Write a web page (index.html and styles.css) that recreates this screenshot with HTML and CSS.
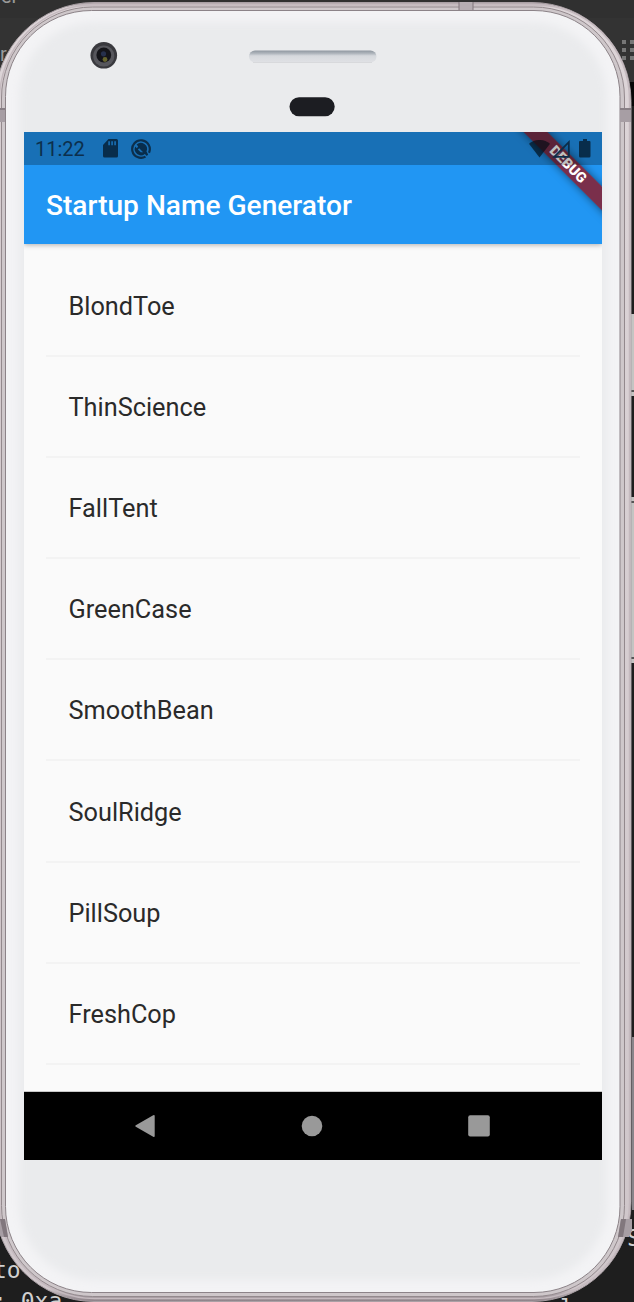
FILE: index.html
```html
<!DOCTYPE html>
<html lang="en">
<head>
<meta charset="utf-8">
<title>Startup Name Generator</title>
<link rel="stylesheet" href="styles.css">
</head>
<body>
<div class="stage">
  <svg class="backdrop" viewBox="0 0 634 1302" width="634" height="1302">
    <rect width="634" height="1302" fill="#1e1e1e"/>
    <rect width="634" height="82" fill="#333"/>
    <rect width="634" height="18" fill="#303030"/>
    <rect x="600" y="82" width="34" height="24" fill="#070707"/>
    <g fill="#777"><path d="M622 40h4v4h-4zM630 40h4v4h-4zM622 48h4v4h-4zM630 48h4v4h-4zM622 56h4v4h-4zM630 56h4v4h-4z"/></g>
    <g fill="#c4c4c2"><path d="M631 314h3v82h-3zM631 497h3v166h-3z"/><path fill="#89858a" d="M632 1037h2v173h-2z"/><path fill="#555" d="M631 390h3v2h-3zM631 501h3v2h-3zM631 657h3v2h-3z"/></g>
    <text class="ui-text" x="1" y="3">er</text>
    <text class="ui-text" x="0" y="61">r</text>
    <text class="code-text" x="-7" y="1278">to</text>
    <text class="code-text" x="-7" y="1309">: 0xa</text>
    <text class="code-text" x="627" y="1246">S</text>
    <text class="code-text" x="560" y="1316">l</text>
  </svg>
  <svg class="frame" viewBox="0 0 634 1302" width="634" height="1302">
    <defs>
      <linearGradient id="metal" x1="0" x2="0" y1="0" y2="1">
        <stop offset="0" stop-color="#a89ea3"/><stop offset=".004" stop-color="#ddd5d8"/>
        <stop offset=".99" stop-color="#cfc6ca"/><stop offset="1" stop-color="#8b8086"/>
      </linearGradient>
      <filter id="soft" x="-5%" y="-5%" width="110%" height="110%"><feGaussianBlur stdDeviation="4"/></filter>
      <clipPath id="faceClip"><rect x="6" y="10.5" width="614" height="1281.5" rx="86"/></clipPath>
      <linearGradient id="speaker" x1="0" x2="0" y1="0" y2="1">
        <stop offset="0" stop-color="#8e969f"/><stop offset=".25" stop-color="#b0b6bd"/><stop offset=".45" stop-color="#d6d9dd"/><stop offset="1" stop-color="#e0e1e5"/>
      </linearGradient>
    </defs>
    <rect x="-5" y="2.5" width="636" height="1299" rx="99" fill="url(#metal)" stroke="#aaa0a5"/>
    <rect x="-.5" y="4.5" width="630" height="1294" rx="95" fill="none" stroke="#c5babf" stroke-width="1.5"/>
    <rect x="1.5" y="7" width="623" height="1289.5" rx="91" fill="#cec7ca" stroke="#93898d"/>
    <rect x="5.5" y="10.5" width="614.5" height="1282" rx="86" fill="#f3f3f5" stroke="#8c8388"/>
    <g clip-path="url(#faceClip)"><rect x="19" y="22" width="588" height="1258" rx="76" fill="#eaebed" filter="url(#soft)"/></g>
    <path d="M0 108h5v14H0zM620 108h11v14h-11z" fill="#a79ea4"/><path d="M0 108h5v2H0zM620 108h11v2h-11z" fill="#887f85"/>
    <path d="M0 1219h5l3 18H1l-1-3zM621 1219h11v12l-3 6h-11z" fill="#a79ea4"/><path d="M0 1219h5l3 18H4zM621 1219h5l-3 18h-5z" fill="#81777d"/>
    <path d="M459 2h14v8h-14z" fill="#b6adb2"/><path d="M459 2v8M473 2v8" stroke="#81777d"/>
    <circle cx="103.800" cy="55.300" r="13.300" fill="#39393e"/>
    <circle cx="103.800" cy="56" r="10.600" fill="#57575d"/>
    <circle cx="103.800" cy="55" r="7.400" fill="#15151a"/>
    <circle cx="103.500" cy="53.800" r="2.600" fill="#26304c"/>
    <circle cx="105" cy="59.500" r="2.400" fill="#66642d"/>
    <rect x="249" y="50.500" width="127.500" height="12" rx="6" fill="url(#speaker)"/>
    <path d="M253 62.500h119" stroke="#d8d9dc"/>
    <rect x="289.500" y="97.300" width="45.200" height="19" rx="9.500" fill="#1c1d22"/>
  </svg>

  <main class="screen">
    <header class="appbar">
      <h1 class="title">Startup Name Generator</h1>
    </header>
    <div class="banner-area"><div class="banner">DEBUG</div></div>
    <div class="statusbar">
      <span class="clock">11:22</span>
      <svg class="sd" viewBox="0 0 15 19" width="15" height="19"><path fill-rule="evenodd" d="M5.500 0h8a1.500 1.500 0 0 1 1.500 1.500v15.500a1.500 1.500 0 0 1-1.500 1.500h-12A1.500 1.500 0 0 1 0 17V6zM5.300 2.200v4h1.600v-4zM8.300 2.200v4h1.600v-4zM11.300 2.200v4h1.600v-4z"/></svg>
      <svg class="agent" viewBox="0 0 20 20" width="20" height="20"><path d="M14.500 17.600A8.800 8.800 0 1 1 18 13.700" fill="none" stroke="#0c2f4c" stroke-width="2.200"/><path d="M5.600 5.600A6.200 6.200 0 0 1 15.500 12.600L17.200 15.600 15.800 17 8.200 9.200 6.800 10.500 9.700 13.200 12.200 13.300 13.800 15A6.200 6.200 0 0 1 4.300 7.600L5.800 9.200 7.200 7.600z"/></svg>
      <span class="grow"></span>
      <svg class="wifi" viewBox="0 0 21 18" width="21" height="18"><path d="M0 3.800C6-1.300 15-1.300 21 3.800L10.500 17.500z"/></svg>
      <svg class="signal" viewBox="0 0 18 18" width="18" height="18"><path d="M2.300 16.800h14.500V2.200z" fill="none" stroke="#0c2c48" stroke-width="1.800"/></svg>
      <svg class="battery" viewBox="0 0 12 19" width="12" height="19"><path d="M4 0h4v2h2.500q1 0 1 1v14q0 1.500-1.300 1.500H1.300Q0 18.500 0 17V3q0-1 1-1h3z"/></svg>
    </div>
    <ul class="list">
      <li class="item">BlondToe</li>
      <li class="item">ThinScience</li>
      <li class="item">FallTent</li>
      <li class="item">GreenCase</li>
      <li class="item">SmoothBean</li>
      <li class="item">SoulRidge</li>
      <li class="item">PillSoup</li>
      <li class="item">FreshCop</li>
    </ul>
    <nav class="navbar">
      <svg viewBox="0 0 24 24" width="24" height="24"><path d="M1.800 11.300 19.200 1.200q1.500-.7 1.500.8v20q0 1.500-1.500.8L1.800 12.700q-1.300-.7 0-1.400z"/></svg>
      <svg viewBox="0 0 24 24" width="24" height="24"><circle cx="12" cy="12" r="10.300"/></svg>
      <svg viewBox="0 0 24 24" width="24" height="24"><rect x="1.200" y="1.300" width="21.600" height="21.300" rx="2"/></svg>
    </nav>
  </main>
</div>
</body>
</html>
```
FILE: styles.css
```css
body { margin: 0; background: #1e1e1e; font-family: Roboto, sans-serif; }
.stage { position: relative; width: 634px; height: 1302px; overflow: hidden; box-sizing: border-box; padding: 132px 32px 142px 24px; }
.backdrop, .frame { position: absolute; left: 0; top: 0; }
.ui-text { font: 20px Roboto, sans-serif; fill: #999; }
.code-text { font: 23px "DejaVu Sans Mono", monospace; fill: #d0d0d0; }
.screen { position: relative; display: flex; flex-direction: column; width: 578px; height: 1028px; overflow: hidden; background: #fafafa; }
.appbar { flex: none; box-sizing: border-box; height: 111.500px; padding: 33px 22px 0; display: flex; align-items: center; background: #2196f3; box-shadow: 0 1px 5px rgba(0,0,0,.3); z-index: 1; }
.title { margin: 0; padding-top: 3px; font-size: 28.100px; font-weight: 500; color: #fff; white-space: nowrap; }
.statusbar { position: absolute; inset: 0 0 auto; z-index: 3; height: 33px; box-sizing: border-box; padding: 0 11px; display: flex; align-items: center; background: rgba(0,0,0,.25); color: #0c2f4c; fill: rgba(0,10,20,.66); }
.clock { font-size: 20px; width: 50px; margin-right: 17.500px; }
.sd { margin-right: 13.500px; }
.grow { flex: 1; }
.wifi { margin-right: 2px; }
.signal { margin-right: 9px; }
.banner-area { position: absolute; inset: 0 0 auto auto; width: 110px; height: 110px; overflow: hidden; z-index: 2; }
.banner { position: absolute; left: 1px; top: 23.500px; width: 150px; height: 17px; line-height: 17px; transform: rotate(45deg); text-align: center; background: rgba(142,24,38,.82); box-shadow: 0 0 8px rgba(0,0,0,.5); color: #fff; font-size: 14.300px; font-weight: 900; }
.list { flex: 1; margin: 0; padding: 22.500px 22px 0; list-style: none; overflow: hidden; border-bottom: 1px solid #c8c8c8; }
.item { position: relative; display: flex; align-items: center; box-sizing: border-box; height: 78.700px; margin-bottom: 22.500px; padding: 1.600px 0 0 22.500px; font-size: 25.300px; color: #2a2a2a; }
.item::after { content: ""; position: absolute; left: 0; right: 0; bottom: -12px; height: 2px; background: #f3f3f3; }
.navbar { flex: none; box-sizing: border-box; height: 68px; padding: 0 2px 1px 0; background: #000; display: flex; align-items: center; justify-content: center; gap: 142.500px; fill: #999; }
```
